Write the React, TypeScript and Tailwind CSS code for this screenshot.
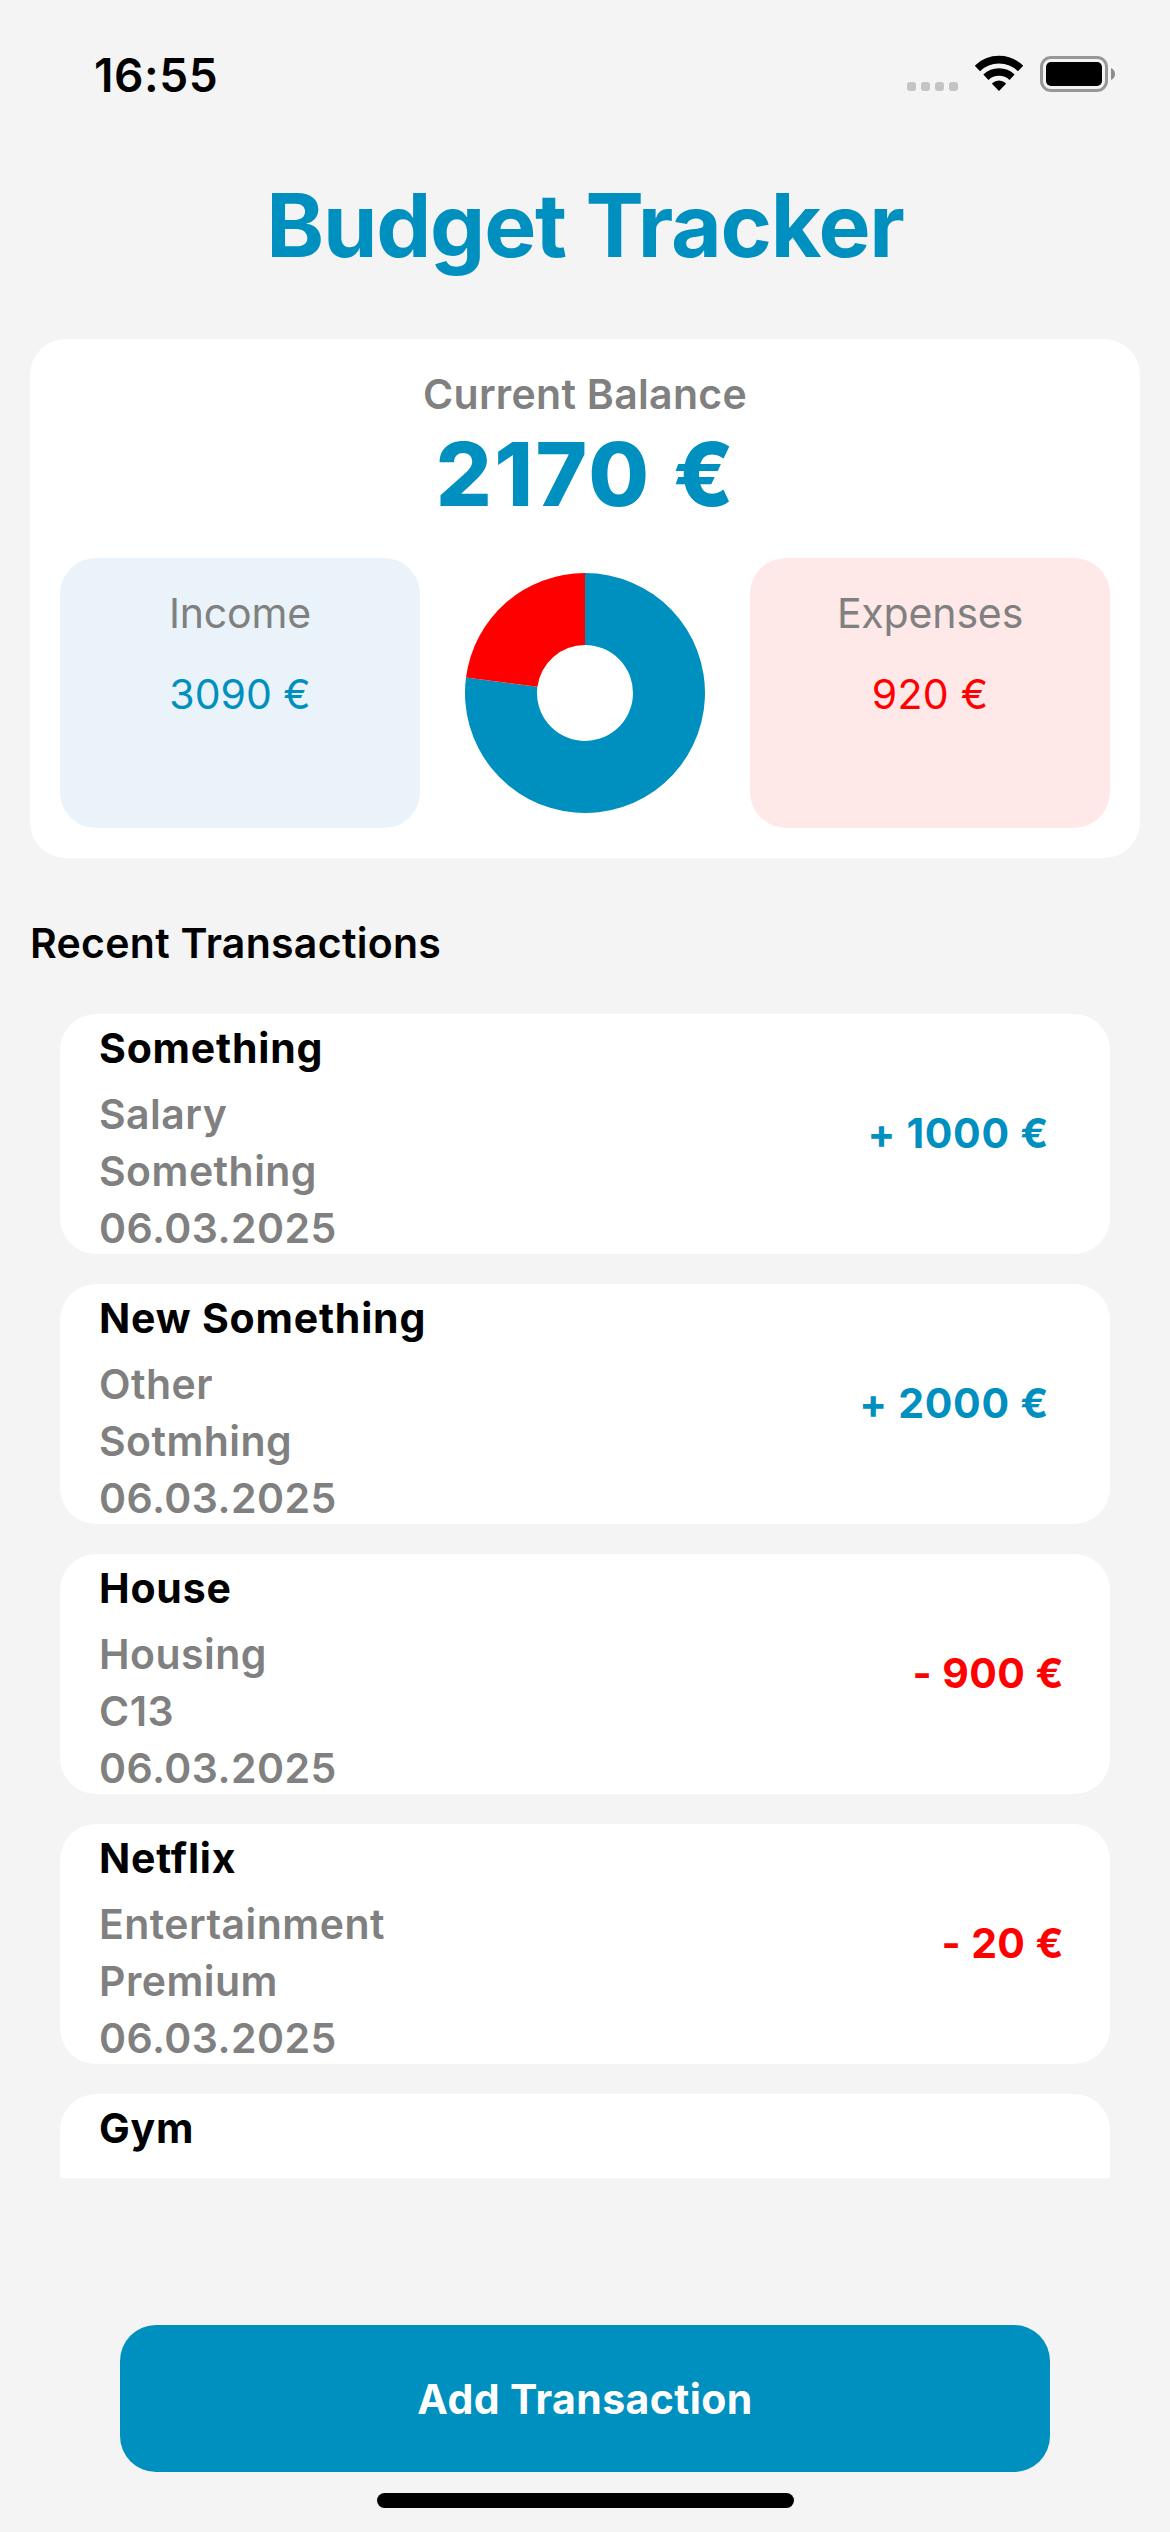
type Transaction = {
  title: string;
  category: string;
  note: string;
  date: string;
  amount: number;
};

const income = 3090;
const expenses = 920;

const transactions: Transaction[] = [
  { title: "Something", category: "Salary", note: "Something", date: "06.03.2025", amount: 1000 },
  { title: "New Something", category: "Other", note: "Sotmhing", date: "06.03.2025", amount: 2000 },
  { title: "House", category: "Housing", note: "C13", date: "06.03.2025", amount: -900 },
  { title: "Netflix", category: "Entertainment", note: "Premium", date: "06.03.2025", amount: -20 },
  { title: "Gym", category: "", note: "", date: "", amount: 0 },
];

function WifiIcon() {
  return (
    <svg className="ml-[17px] h-[36px] w-[48px]" viewBox="0 0 48 36" fill="none">
      <path d="M2.4 13.4a31 31 0 0 1 43.2 0" stroke="#000" strokeWidth="7.6" />
      <path d="M10.9 22.2a19 19 0 0 1 26.2 0" stroke="#000" strokeWidth="7.4" />
      <path d="M24 36l-6.6-6.7a.8.8 0 0 1 0-1.2a9.8 9.8 0 0 1 13.2 0a.8.8 0 0 1 0 1.2z" fill="#000" />
    </svg>
  );
}

function StatusBar() {
  return (
    <header className="flex h-[150px] items-center justify-between pr-[55px] pl-[94px]">
      <span className="text-[46px] leading-none font-semibold tracking-[0.6px]">16:55</span>
      <div className="mb-[3px] flex items-end">
        <div className="mb-px flex gap-[5px]">
          {[0, 1, 2, 3].map((dot) => (
            <span key={dot} className="size-[9px] rounded-[3px] bg-[#c4c4c4]" />
          ))}
        </div>
        <div className="mb-px flex">
          <WifiIcon />
        </div>
        <div className="ml-[17px] flex items-center">
          <div className="h-[36px] w-[68px] rounded-[11px] border-[3px] border-[#979797] p-[3px]">
            <div className="h-full rounded-[5px] bg-black" />
          </div>
          <svg className="ml-[3px] h-[12px] w-[4px]" viewBox="0 0 4 12">
            <path d="M0 0c2.4 1 4 3.3 4 6s-1.6 5-4 6z" fill="#8c8c8c" />
          </svg>
        </div>
      </div>
    </header>
  );
}

function point(radius: number, angle: number) {
  return `${120 + radius * Math.sin(angle)} ${120 - radius * Math.cos(angle)}`;
}

function ringSlice(from: number, to: number) {
  const large = to - from > Math.PI ? 1 : 0;
  return `M${point(120, from)}A120 120 0 ${large} 1 ${point(120, to)}L${point(48, to)}A48 48 0 ${large} 0 ${point(48, from)}Z`;
}

function DonutChart() {
  const split = (income / (income + expenses)) * 2 * Math.PI;
  return (
    <svg className="size-[240px]" viewBox="0 0 240 240">
      <path d={ringSlice(0, split)} fill="#0090bf" />
      <path d={ringSlice(split, 2 * Math.PI)} fill="#ff0000" />
    </svg>
  );
}

function BalanceCard() {
  return (
    <section className="mx-[30px] mt-[39px] flex h-[519px] flex-col rounded-[36px] bg-white px-[30px] pt-[30px] text-center">
      <p className="text-[41px] leading-[50px] font-semibold tracking-[0.3px] text-[#808080]">Current Balance</p>
      <p className="pl-[2px] text-[88px] leading-[110px] font-extrabold tracking-[2.4px] text-[#0090bf]">
        {income - expenses} €
      </p>
      <div className="mt-[29px] flex h-[270px] items-center justify-between text-[41px] leading-[50px]">
        <div className="h-full w-[360px] rounded-[36px] bg-[#e9f3f9] pt-[30px]">
          <p className="tracking-[-0.15px] text-[#808080]">Income</p>
          <p className="mt-[31px] text-[#0090bf]">{income} €</p>
        </div>
        <DonutChart />
        <div className="h-full w-[360px] rounded-[36px] bg-[#ffe8e8] pt-[30px]">
          <p className="tracking-[-0.15px] text-[#808080]">Expenses</p>
          <p className="mt-[31px] tracking-[0.3px] text-[#ff0000]">{expenses} €</p>
        </div>
      </div>
    </section>
  );
}

function Amount({ value }: { value: number }) {
  if (value === 0) return null;
  return value > 0 ? (
    <p className="mt-[91px] pr-[61px] font-bold tracking-[0.7px] text-[#0090bf]">+ {value} €</p>
  ) : (
    <p className="mt-[91px] pr-[46px] font-bold tracking-[0.4px] text-[#ff0000]">- {-value} €</p>
  );
}

function TransactionRow({ item }: { item: Transaction }) {
  return (
    <li className="flex h-[240px] shrink-0 justify-between rounded-[36px] bg-white pl-[39px] text-[41px] leading-[57px]">
      <div className="pt-[6px]">
        <p className="font-bold tracking-[0.8px]">{item.title}</p>
        <div className="mt-[9px] font-semibold tracking-[0.45px] text-[#808080]">
          <p>{item.category}</p>
          <p>{item.note}</p>
          <p>{item.date}</p>
        </div>
      </div>
      <Amount value={item.amount} />
    </li>
  );
}

export default function App() {
  return (
    <main className="flex h-[2532px] w-[1170px] flex-col overflow-hidden bg-[#f4f4f4] font-['Inter',sans-serif] text-black">
      <StatusBar />
      <h1 className="text-center text-[87.5px] leading-[150px] font-bold tracking-[-1.2px] text-[#0090bf]">
        Budget Tracker
      </h1>
      <BalanceCard />
      <h2 className="mt-[60px] pl-[30px] text-[41px] leading-[50px] font-semibold tracking-[0.3px]">
        Recent Transactions
      </h2>
      <ul className="mx-[60px] mt-[46px] flex h-[1164px] flex-col gap-[30px] overflow-hidden">
        {transactions.map((item) => (
          <TransactionRow key={item.title} item={item} />
        ))}
      </ul>
      <button className="mx-[120px] mt-[147px] h-[147px] rounded-[36px] bg-[#0090bf] text-[41px] leading-[50px] font-bold tracking-[0.4px] text-white">
        Add Transaction
      </button>
      <div className="mt-[21px] h-[15px] w-[417px] self-center rounded-full bg-black" />
    </main>
  );
}
